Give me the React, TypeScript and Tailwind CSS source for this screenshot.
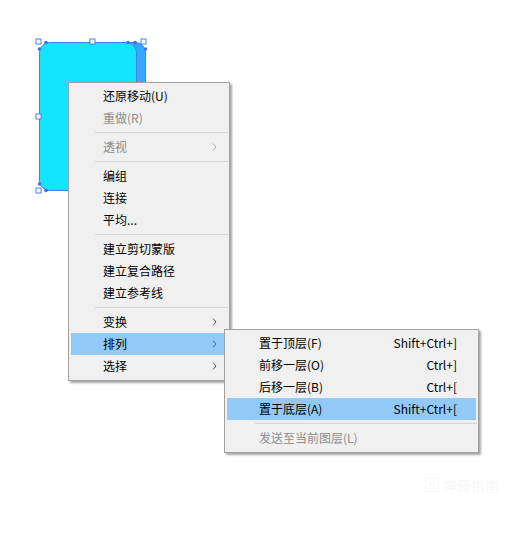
import React from 'react';

// 画布上的对象 + 右键菜单（排列子菜单展开）
type Row =
    | { kind: 'item'; label: string; disabled?: boolean; arrow?: boolean; shortcut?: string; active?: boolean }
    | { kind: 'sep' };

const mainMenu: Row[] = [
    { kind: 'item', label: '还原移动(U)' },
    { kind: 'item', label: '重做(R)', disabled: true },
    { kind: 'sep' },
    { kind: 'item', label: '透视', disabled: true, arrow: true },
    { kind: 'sep' },
    { kind: 'item', label: '编组' },
    { kind: 'item', label: '连接' },
    { kind: 'item', label: '平均...' },
    { kind: 'sep' },
    { kind: 'item', label: '建立剪切蒙版' },
    { kind: 'item', label: '建立复合路径' },
    { kind: 'item', label: '建立参考线' },
    { kind: 'sep' },
    { kind: 'item', label: '变换', arrow: true },
    { kind: 'item', label: '排列', arrow: true, active: true },
    { kind: 'item', label: '选择', arrow: true },
];

const subMenu: Row[] = [
    { kind: 'item', label: '置于顶层(F)', shortcut: 'Shift+Ctrl+]' },
    { kind: 'item', label: '前移一层(O)', shortcut: 'Ctrl+]' },
    { kind: 'item', label: '后移一层(B)', shortcut: 'Ctrl+[' },
    { kind: 'item', label: '置于底层(A)', shortcut: 'Shift+Ctrl+[', active: true },
    { kind: 'sep' },
    { kind: 'item', label: '发送至当前图层(L)', disabled: true },
];

const Chevron: React.FC<{ disabled?: boolean }> = ({ disabled }) => (
    <svg width="5" height="8" viewBox="0 0 5 8" className="shrink-0">
        <path d="M1 0.5 L4 4 L1 7.5" fill="none" stroke={disabled ? '#a8a8a8' : '#5a5a5a'} strokeWidth="1" />
    </svg>
);

const Menu: React.FC<{ rows: Row[]; className: string; sepIndent: string; itemPad: string }> = ({
    rows,
    className,
    sepIndent,
    itemPad,
}) => (
    <div
        className={`absolute bg-[#f0f0f0] border border-[#a0a0a0] pt-[2px] pb-[3px] shadow-[2px_2px_2px_rgba(0,0,0,0.35)] ${className}`}
    >
        {rows.map((r, i) =>
            r.kind === 'sep' ? (
                <div key={i} className="h-[7px] flex items-center">
                    <div className={`h-px flex-1 bg-[#d7d7d7] mr-[1px] ${sepIndent}`} />
                </div>
            ) : (
                <div
                    key={i}
                    className={`mx-[2px] h-[22px] flex items-center pl-[32px] ${itemPad} ${
                        r.active ? 'bg-[#91c9f7]' : ''
                    }`}
                >
                    <span className={`flex-1 whitespace-nowrap ${r.disabled ? 'text-[#8d8d8d]' : 'text-black'}`}>
                        {r.label}
                    </span>
                    {r.shortcut && <span className="whitespace-nowrap text-black">{r.shortcut}</span>}
                    {r.arrow && <Chevron disabled={r.disabled} />}
                </div>
            )
        )}
    </div>
);

const Handle: React.FC<{ x: number; y: number }> = ({ x, y }) => (
    <rect x={x - 2.5} y={y - 2.5} width="5" height="5" fill="#fff" stroke="#4a7cf0" strokeWidth="1" />
);

const Dot: React.FC<{ x: number; y: number }> = ({ x, y }) => <circle cx={x} cy={y} r="1.8" fill="#3f6ee8" />;

const Artwork: React.FC = () => (
    <svg width="200" height="220" className="absolute left-0 top-0">
        <rect x="46.5" y="42.5" width="99" height="148" rx="10" fill="#35a9ff" stroke="#4a7cf0" />
        <rect x="39.5" y="42.5" width="97" height="148" rx="10" fill="#12e5ff" stroke="#4a7cf0" />
        <Dot x={46} y={42.5} />
        <Dot x={39.5} y={49} />
        <Dot x={128} y={42.5} />
        <Dot x={135} y={42.5} />
        <Dot x={145.5} y={49} />
        <Dot x={39.5} y={184} />
        <Dot x={46} y={190.5} />
        <Handle x={38.5} y={41.5} />
        <Handle x={92.5} y={41.5} />
        <Handle x={143.5} y={41.5} />
        <Handle x={38.5} y={116.5} />
        <Handle x={38.5} y={190.5} />
    </svg>
);

export default function App() {
    return (
        <div className="relative w-[525px] h-[536px] bg-white overflow-hidden text-[12px] leading-none font-['Noto_Sans_CJK_SC','Microsoft_YaHei',sans-serif]">
            <Artwork />
            <Menu rows={mainMenu} className="left-[68px] top-[82px] w-[162px]" sepIndent="ml-[26px]" itemPad="pr-[10px]" />
            <Menu rows={subMenu} className="left-[224px] top-[329px] w-[255px]" sepIndent="ml-[30px]" itemPad="pr-[19px]" />
            {/* 右下角水印，几乎看不见 */}
            <div className="absolute left-[425px] top-[478px] flex items-center gap-1 text-[#f7f7f7] text-[14px]">
                <span className="w-[14px] h-[14px] border border-[#f6f6f6] flex items-center justify-center text-[10px]">S</span>
                <span>神奇指南</span>
            </div>
        </div>
    );
}
